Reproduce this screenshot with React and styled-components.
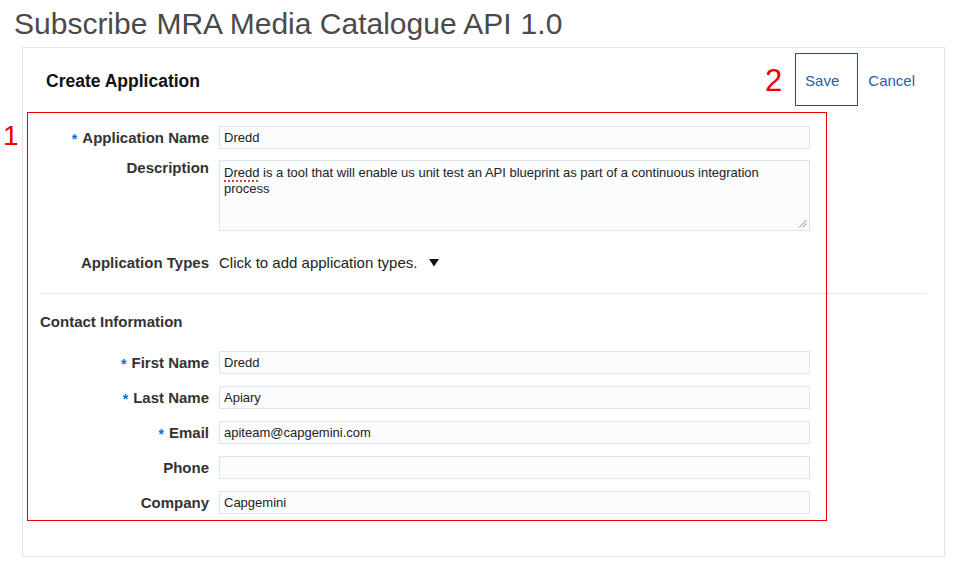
import React from 'react'
import styled, { createGlobalStyle } from 'styled-components'

const GlobalStyle = createGlobalStyle`
  html, body {
    margin: 0;
    padding: 0;
    background: #fff;
  }
  body {
    font-family: "Liberation Sans", Arial, Helvetica, sans-serif;
    color: #333;
  }
`

const Page = styled.div`
  position: relative;
  width: 956px;
  height: 567px;
  overflow: hidden;
`

const Title = styled.h1`
  margin: 0;
  padding: 6px 0 0 14px;
  height: 41px;
  font-size: 30px;
  line-height: 36px;
  font-weight: 400;
  color: #4a4a4a;
  display: flex;
  gap: 9px;
  white-space: nowrap;
`

const Panel = styled.section`
  box-sizing: border-box;
  margin-left: 22px;
  width: 923px;
  height: 510px;
  border: 1px solid #e3e6e9;
  border-bottom-color: #dde1e4;
  display: flex;
  flex-direction: column;
`

const Header = styled.header`
  height: 64px;
  padding: 0 29px 0 23px;
  display: flex;
  align-items: center;
  justify-content: space-between;
`

const Heading = styled.h2`
  margin: 2px 0 0;
  font-size: 17.5px;
  font-weight: 700;
  color: #111;
`

const Actions = styled.div`
  display: flex;
  align-items: center;
  gap: 29px;
`

const LinkButton = styled.a`
  font-size: 15px;
  color: #1f5ea8;
  text-decoration: none;
  cursor: pointer;
`

const FormBody = styled.div`
  padding: 14px 18px 0 17px;
  display: flex;
  flex-direction: column;
`

const Row = styled.div`
  display: grid;
  grid-template-columns: 169px 591px;
  column-gap: 10px;
  align-items: start;
  margin-top: ${p => p.$gap || 0}px;
`

const Label = styled.label`
  display: block;
  height: ${p => (p.$top ? 'auto' : '23px')};
  text-align: right;
  font-size: 15px;
  font-weight: 700;
  color: #333;
  line-height: ${p => (p.$top ? '16px' : '23px')};
  white-space: nowrap;
`

const Required = styled.span`
  color: #0a6fd0;
  font-size: 14px;
  line-height: 1;
  margin-right: 5px;
  position: relative;
  top: 1px;
`

const Input = styled.div`
  box-sizing: border-box;
  height: 23px;
  padding: 0 4px;
  border: 1px solid #e0e4e7;
  background: #fbfcfd;
  font-size: 13px;
  line-height: 21px;
  color: #222;
`

const TextArea = styled.div`
  position: relative;
  box-sizing: border-box;
  height: 71px;
  padding: 4px 4px;
  border: 1px solid #e0e4e7;
  background: #fbfcfd;
  font-size: 13px;
  line-height: 16px;
  color: #222;
`

const Misspelled = styled.span`
  text-decoration: underline dotted #e0403a;
  text-decoration-thickness: 2px;
  text-underline-offset: 3px;
`

const Grip = styled.svg`
  position: absolute;
  right: 2px;
  bottom: 2px;
`

const Picker = styled.div`
  display: flex;
  align-items: center;
  gap: 12px;
  height: 23px;
  font-size: 15px;
  line-height: 23px;
  color: #222;
`

const Divider = styled.hr`
  margin: 19px 0 0;
  border: 0;
  border-top: 1px solid #e8eaec;
  height: 0;
`

const SubHeading = styled.h3`
  margin: 19px 0 0;
  font-size: 15px;
  line-height: 18px;
  font-weight: 700;
  color: #333;
`

const Callout = styled.div`
  position: absolute;
  box-sizing: border-box;
  border: 1px solid #ee0000;
  pointer-events: none;
`

const CalloutNumber = styled.span`
  position: absolute;
  color: #ee0000;
  font-size: ${p => p.$size}px;
  line-height: 1;
`

const Field = ({ label, required, top, gap, children }) => (
  <Row $gap={gap}>
    <Label $top={top}>
      {required && <Required>*</Required>}
      {label}
    </Label>
    {children}
  </Row>
)

const contacts = [
  { label: 'First Name', value: 'Dredd', required: true },
  { label: 'Last Name', value: 'Apiary', required: true },
  { label: 'Email', value: 'apiteam@capgemini.com', required: true },
  { label: 'Phone', value: '' },
  { label: 'Company', value: 'Capgemini' }
]

const App = () => (
  <Page>
    <GlobalStyle />
    <Title>
      <span>Subscribe</span>
      <span>MRA Media Catalogue API</span>
      <span>1.0</span>
    </Title>
    <Panel>
      <Header>
        <Heading>Create Application</Heading>
        <Actions>
          <LinkButton>Save</LinkButton>
          <LinkButton>Cancel</LinkButton>
        </Actions>
      </Header>
      <FormBody>
        <Field label="Application Name" required>
          <Input>Dredd</Input>
        </Field>
        <Field label="Description" top gap={11}>
          <TextArea>
            <Misspelled>Dredd</Misspelled> is a tool that will enable us unit test an API blueprint as part of a continuous integration
            <br />
            process
            <Grip width="9" height="9" viewBox="0 0 9 9">
              <line x1="1" y1="8.5" x2="8.5" y2="1" stroke="#8a8d90" strokeWidth="1" />
              <line x1="4.5" y1="8.5" x2="8.5" y2="4.5" stroke="#8a8d90" strokeWidth="1" />
            </Grip>
          </TextArea>
        </Field>
        <Field label="Application Types" gap={20}>
          <Picker>
            <span>Click to add application types.</span>
            <svg width="10" height="8" viewBox="0 0 10 8">
              <polygon points="0,0 10,0 5,7.5" fill="#111" />
            </svg>
          </Picker>
        </Field>
        <Divider />
        <SubHeading>Contact Information</SubHeading>
        {contacts.map((c, i) => (
          <Field key={c.label} label={c.label} required={c.required} gap={i === 0 ? 20 : 12}>
            <Input>{c.value}</Input>
          </Field>
        ))}
      </FormBody>
    </Panel>

    <Callout style={{ left: 27, top: 112, width: 800, height: 409 }} />
    <CalloutNumber $size={28} style={{ left: 3, top: 122 }}>1</CalloutNumber>
    <Callout style={{ left: 795, top: 53, width: 63, height: 53 }} />
    <CalloutNumber $size={31} style={{ left: 765, top: 65 }}>2</CalloutNumber>
  </Page>
)

export default App
